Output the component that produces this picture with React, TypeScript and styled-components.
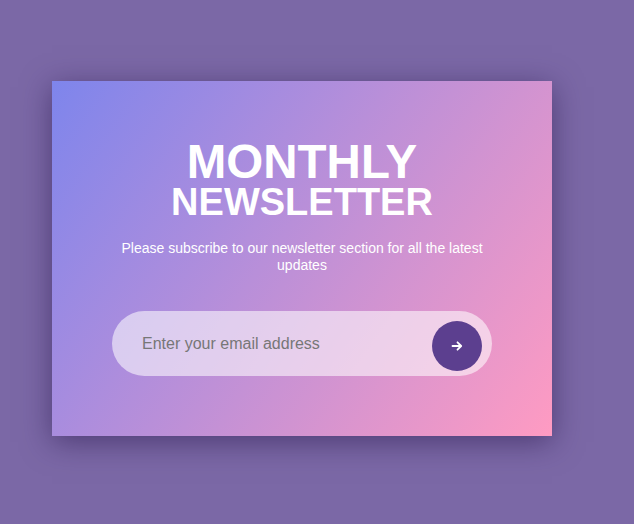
import React from "react";
import styled, { createGlobalStyle } from "styled-components";

const Global = createGlobalStyle`
  html, body { margin: 0; padding: 0; background: #7b68a6; }
  body { font-family: "Liberation Sans", Arial, Helvetica, sans-serif; }
  * { box-sizing: border-box; }
`;

const Page = styled.div`
  min-height: 524px;
  width: 604px;
  display: flex;
  justify-content: center;
  align-items: flex-start;
  padding-top: 81px;
`;

const Card = styled.section`
  width: 500px;
  height: 355px;
  padding: 58px 60px 60px;
  display: flex;
  flex-direction: column;
  align-items: center;
  background: linear-gradient(125deg, #7e85ec 0%, #ff9bc2 100%);
  box-shadow: 0 6px 28px rgba(40, 22, 75, 0.55);
  color: #fff;
`;

const Title = styled.h1`
  margin: 0;
  display: flex;
  flex-direction: column;
  align-items: center;
  font-weight: 700;
  text-align: center;
`;

const TitleLine = styled.span<{ $size: number; $lh: number }>`
  font-size: ${(p) => p.$size}px;
  line-height: ${(p) => p.$lh}px;
`;

const Lead = styled.p`
  margin: 20px 0 0;
  font-size: 14px;
  line-height: 17px;
  text-align: center;
`;

const Form = styled.form`
  margin-top: 37px;
  width: 380px;
  height: 65px;
  border-radius: 33px;
  background: rgba(255, 255, 255, 0.56);
  display: flex;
  align-items: center;
  padding: 5px 10px 0 30px;
`;

const EmailInput = styled.input`
  flex: 1;
  min-width: 0;
  border: none;
  outline: none;
  background: transparent;
  font-family: "Liberation Sans", Arial, sans-serif;
  font-size: 16px;
  color: #333;
  padding: 0;
  margin-top: -5px;
  &::placeholder { color: #777; }
`;

const SendButton = styled.button`
  width: 50px;
  height: 50px;
  border-radius: 50%;
  border: none;
  background: #5c3f8f;
  display: flex;
  align-items: center;
  justify-content: center;
  padding: 0;
  cursor: pointer;
`;

export default function App() {
  return (
    <>
      <Global />
      <Page>
        <Card>
          <Title>
            <TitleLine $size={47.5} $lh={45}>MONTHLY</TitleLine>
            <TitleLine $size={38} $lh={36}>NEWSLETTER</TitleLine>
          </Title>
          <Lead>Please subscribe to our newsletter section for all the latest updates</Lead>
          <Form onSubmit={(e) => e.preventDefault()}>
            <EmailInput type="email" placeholder="Enter your email address" />
            <SendButton type="submit" aria-label="Subscribe">
              <svg width="12" height="12" viewBox="0 0 12 12" fill="none">
                <path d="M1.5 6H10M6.5 2.3L10.2 6L6.5 9.7" stroke="#fff" strokeWidth="1.8" strokeLinecap="round" strokeLinejoin="round" />
              </svg>
            </SendButton>
          </Form>
        </Card>
      </Page>
    </>
  );
}
